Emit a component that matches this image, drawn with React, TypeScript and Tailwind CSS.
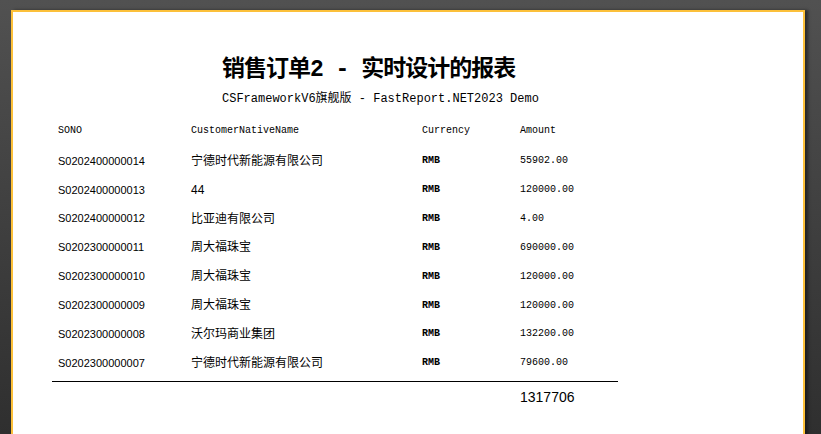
const rows = [
  { sono: "S0202400000014", name: "宁德时代新能源有限公司", cur: "RMB", amount: "55902.00" },
  { sono: "S0202400000013", name: "44", cur: "RMB", amount: "120000.00" },
  { sono: "S0202400000012", name: "比亚迪有限公司", cur: "RMB", amount: "4.00" },
  { sono: "S0202300000011", name: "周大福珠宝", cur: "RMB", amount: "690000.00" },
  { sono: "S0202300000010", name: "周大福珠宝", cur: "RMB", amount: "120000.00" },
  { sono: "S0202300000009", name: "周大福珠宝", cur: "RMB", amount: "120000.00" },
  { sono: "S0202300000008", name: "沃尔玛商业集团", cur: "RMB", amount: "132200.00" },
  { sono: "S0202300000007", name: "宁德时代新能源有限公司", cur: "RMB", amount: "79600.00" },
];

const mono = "font-['Liberation_Mono','Noto_Sans_CJK_SC',monospace]";
const sans = "font-['Liberation_Sans','Noto_Sans_CJK_SC',sans-serif]";
const cols = "grid grid-cols-[133px_231px_98px_1fr] pl-[6px]";

export default function App() {
  return (
    <div className="h-[434px] w-full overflow-hidden bg-gradient-to-b from-[#515151] to-[#2f2f2f] pl-[11px] pt-[10px]">
      {/* Report page */}
      <div className="h-[440px] w-[794px] border-2 border-[#fcc03a] bg-white text-black shadow-[3px_0_3px_rgba(0,0,0,0.45)]">
        <div className="pl-[209px] pt-[44px]">
          <div className={`${mono} text-[23px] font-semibold leading-[28px] tracking-[-1px]`}>
            销售订单2 - 实时设计的报表
          </div>
          <div className={`${mono} mt-[7px] text-[12px] leading-[16px]`}>
            CSFrameworkV6旗舰版 - FastReport.NET2023 Demo
          </div>
        </div>

        <div className="ml-[39px] mt-[15px] w-[566px]">
          <div className={`${cols} ${mono} h-[16px] items-center text-[10px]`}>
            <span>SONO</span>
            <span>CustomerNativeName</span>
            <span>Currency</span>
            <span>Amount</span>
          </div>

          <div className="mt-[8.5px]">
            {rows.map((r, i) => (
              <div key={i} className={`${cols} h-[28.85px] items-center`}>
                <span className={`${sans} text-[11px]`}>{r.sono}</span>
                <span className={`${sans} text-[12px]`}>{r.name}</span>
                <span className={`${mono} text-[10px] font-bold`}>{r.cur}</span>
                <span className={`${mono} text-[10px]`}>{r.amount}</span>
              </div>
            ))}
          </div>

          <div className="mt-[4px] border-t border-black" />
          <div className={`${cols} mt-[5px] h-[16px] items-center`}>
            <span />
            <span />
            <span />
            <span className={`${sans} text-[14px]`}>1317706</span>
          </div>
        </div>
      </div>
    </div>
  );
}
